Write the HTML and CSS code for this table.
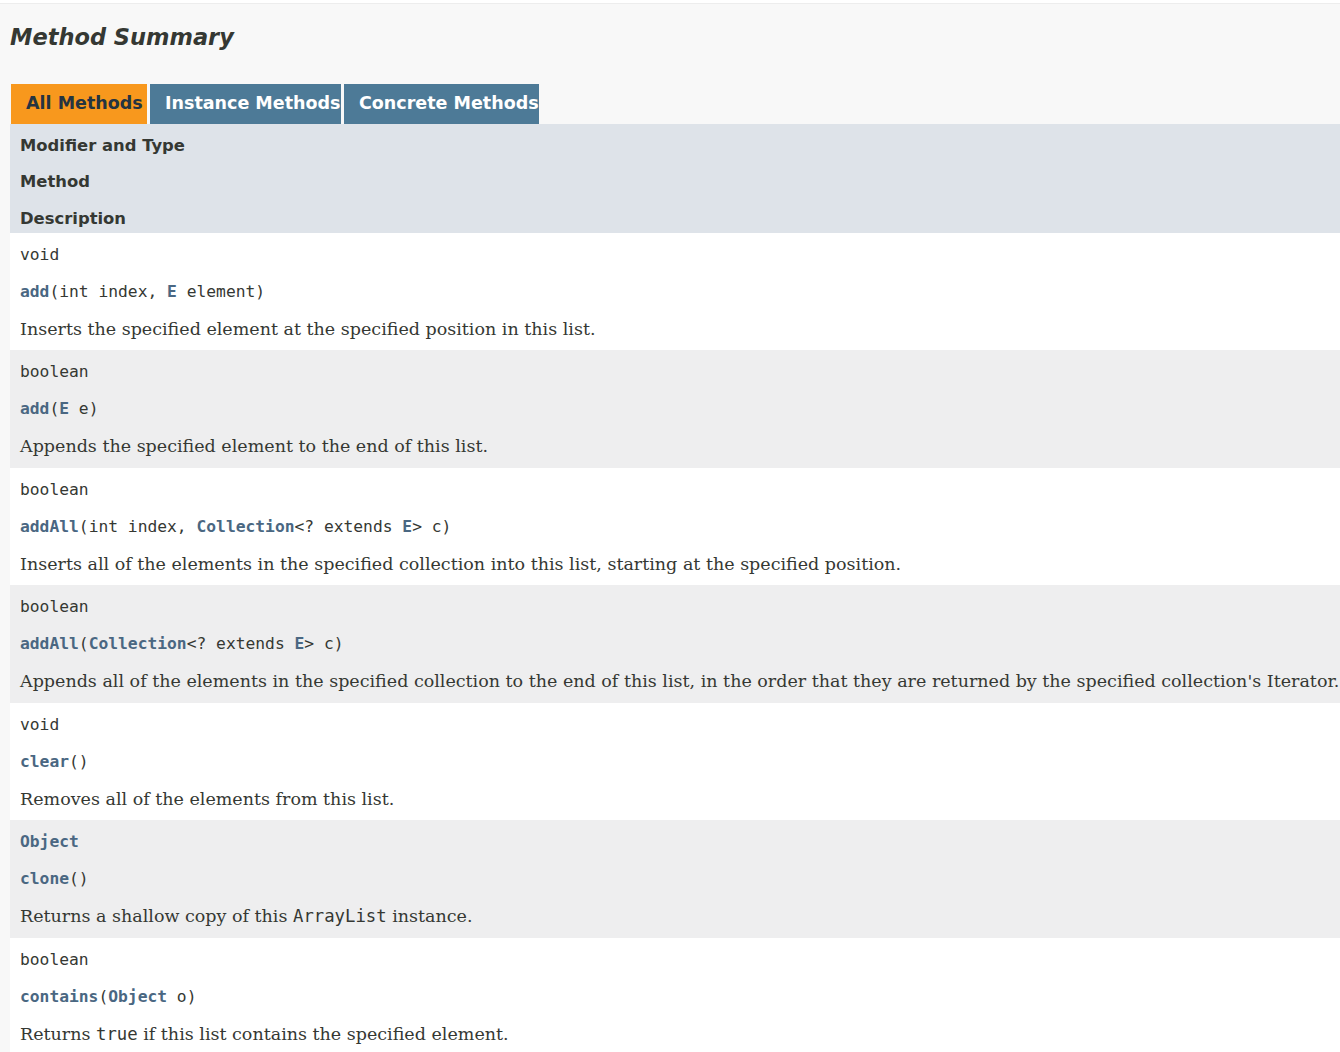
FILE: index.html
```html
<!DOCTYPE html>
<html lang="en">
<head>
  <meta charset="UTF-8">
  <title>ArrayList - Method Summary</title>
  <link rel="stylesheet" href="styles.css">
</head>
<body>

  <!-- Resumo dos metodos -->
  <section class="summary">
    <h2 class="title">Method Summary</h2>

    <div class="tabs">
      <button class="tab active tab-all">All Methods</button>
      <button class="tab tab-instance">Instance Methods</button>
      <button class="tab tab-concrete">Concrete Methods</button>
    </div>

    <div class="table">
      <div class="head">
        <div class="cell">Modifier and Type</div>
        <div class="cell">Method</div>
        <div class="cell">Description</div>
      </div>

      <div class="row even">
        <div class="cell code">void</div>
        <div class="cell code"><a href="#">add</a>(int&nbsp;index, <a href="#">E</a>&nbsp;element)</div>
        <div class="cell desc">Inserts the specified element at the specified position in this list.</div>
      </div>

      <div class="row odd">
        <div class="cell code">boolean</div>
        <div class="cell code"><a href="#">add</a>(<a href="#">E</a>&nbsp;e)</div>
        <div class="cell desc">Appends the specified element to the end of this list.</div>
      </div>

      <div class="row even">
        <div class="cell code">boolean</div>
        <div class="cell code"><a href="#">addAll</a>(int&nbsp;index, <a href="#">Collection</a>&lt;? extends <a href="#">E</a>&gt;&nbsp;c)</div>
        <div class="cell desc">Inserts all of the elements in the specified collection into this list, starting at the specified position.</div>
      </div>

      <div class="row odd">
        <div class="cell code">boolean</div>
        <div class="cell code"><a href="#">addAll</a>(<a href="#">Collection</a>&lt;? extends <a href="#">E</a>&gt;&nbsp;c)</div>
        <div class="cell desc">Appends all of the elements in the specified collection to the end of this list, in the order that they are returned by the specified collection's Iterator.</div>
      </div>

      <div class="row even">
        <div class="cell code">void</div>
        <div class="cell code"><a href="#">clear</a>()</div>
        <div class="cell desc">Removes all of the elements from this list.</div>
      </div>

      <div class="row odd">
        <div class="cell code"><a href="#">Object</a></div>
        <div class="cell code"><a href="#">clone</a>()</div>
        <div class="cell desc">Returns a shallow copy of this <code>ArrayList</code> instance.</div>
      </div>

      <div class="row even">
        <div class="cell code">boolean</div>
        <div class="cell code"><a href="#">contains</a>(<a href="#">Object</a>&nbsp;o)</div>
        <div class="cell desc">Returns <code>true</code> if this list contains the specified element.</div>
      </div>
    </div>
  </section>

</body>
</html>
```

FILE: styles.css
```css
html, body {
  overflow: hidden;
}

body {
  margin: 0;
  background: #ffffff;
  font-family: 'DejaVu Sans', Arial, sans-serif;
  color: #353833;
}

.summary {
  margin-top: 3px;
  border-top: 1px solid #ededed;
  background-color: #f8f8f8;
  padding: 0 0 0 10px;
  min-height: 1100px;
}

.title {
  margin: 18px 0 32px 0;
  font-size: 22.5px;
  line-height: 30px;
  font-style: italic;
  font-weight: bold;
  color: #353833;
}

/* Abas */
.tabs {
  display: flex;
  gap: 3px;
  margin-left: 1px;
}

.tab {
  height: 40px;
  padding: 0 0 2px 15px;
  border: none;
  border-radius: 0;
  text-align: left;
  white-space: nowrap;
  overflow: hidden;
  font-family: 'DejaVu Sans', Arial, sans-serif;
  font-size: 17.5px;
  font-weight: bold;
  background-color: #4d7a97;
  color: #ffffff;
}

.tab.active {
  background-color: #f8981d;
  color: #253441;
}

.tab-all { width: 136px; }
.tab-instance { width: 191px; }
.tab-concrete { width: 195px; }

/* Tabela */
.table {
  width: 1400px;
}

.cell {
  padding: 10px 3px 2.5px 10px;
  line-height: 24.5px;
  white-space: nowrap;
}

.head {
  background-color: #dee3e9;
  font-size: 16.4px;
  font-weight: bold;
}

.head .cell {
  padding: 10px 3px 2px 10px;
  line-height: 24.33px;
}

.row.even { background-color: #ffffff; }
.row.odd { background-color: #eeeeef; }

.code {
  font-family: 'DejaVu Sans Mono', monospace;
  font-size: 16.3px;
}

.code a {
  color: #4a6782;
  font-weight: bold;
  text-decoration: none;
}

.desc {
  font-family: 'DejaVu Serif', Georgia, serif;
  font-size: 17.5px;
  padding-top: 10px;
  padding-bottom: 9px;
}

.desc code {
  font-family: 'DejaVu Sans Mono', monospace;
  font-size: 17.3px;
}
```
